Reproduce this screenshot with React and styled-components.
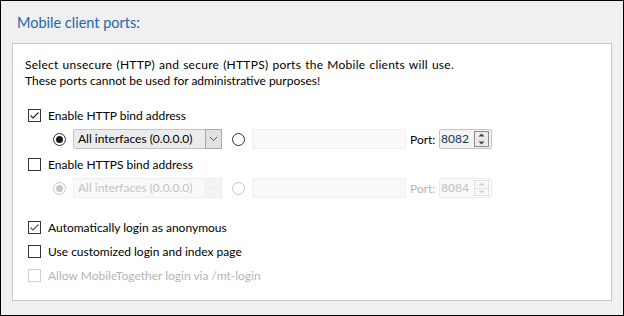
import React from "react";
import styled, { createGlobalStyle } from "styled-components";

const Global = createGlobalStyle`
  html, body { margin: 0; padding: 0; background: #f0f0f0; }
  * { box-sizing: border-box; }
`;

const FONT = `"Segoe UI", "Lato", "Open Sans", sans-serif`;

const Frame = styled.div`
  width: 624px;
  height: 316px;
  border: 1px solid #000;
  background: #f0f0f0;
  font-family: ${FONT};
  font-size: 12px;
  color: #000;
  display: flex;
  flex-direction: column;
  padding: 0 11px 14px 11px;
`;

const Title = styled.h2`
  margin: 0;
  height: 42px;
  padding: 12px 0 0 5px;
  font-weight: 400;
  font-size: 14.5px;
  line-height: 20px;
  color: #2467ae;
`;

const Panel = styled.div`
  flex: 1;
  background: #fff;
  border: 1px solid #c9c9c9;
  padding: 13px 12px 0 12px;
  display: flex;
  flex-direction: column;
`;

const Intro = styled.p`
  margin: 0 0 16px 0;
  line-height: 16px;
`;

const IntroLine = styled.span`
  display: block;
  white-space: nowrap;
  letter-spacing: ${(p) => p.$ls || 0}px;
  word-spacing: ${(p) => p.$ws || 0}px;
`;

const CheckRow = styled.label`
  display: flex;
  align-items: center;
  height: 20px;
  padding-left: 3px;
  margin-top: ${(p) => p.$mt || 0}px;
  color: ${(p) => (p.$disabled ? "#b4b4b4" : "#000")};
`;

const Box = styled.span`
  width: 13px;
  height: 13px;
  border: 1px solid ${(p) => (p.$disabled ? "#cfcfcf" : "#333")};
  background: #fff;
  margin-right: 7px;
  display: flex;
  align-items: center;
  justify-content: center;
  flex: none;
`;

const BindRow = styled.div`
  display: flex;
  align-items: center;
  height: 20px;
  margin-top: 4px;
  padding-left: 28px;
`;

const Radio = styled.span`
  width: 13px;
  height: 13px;
  border-radius: 50%;
  border: 1px solid ${(p) => (p.$disabled ? "#c6c6c6" : "#333")};
  background: #fff;
  display: flex;
  align-items: center;
  justify-content: center;
  flex: none;
  margin-left: ${(p) => p.$ml || 0}px;
  &::after {
    content: "";
    display: ${(p) => (p.$checked ? "block" : "none")};
    width: 7px;
    height: 7px;
    border-radius: 50%;
    background: ${(p) => (p.$disabled ? "#c6c6c6" : "#1a1a1a")};
  }
`;

const Combo = styled.div`
  flex: 0 0 149px;
  height: 20px;
  margin-left: 7px;
  border: 1px solid ${(p) => (p.$disabled ? "#ededed" : "#c4c4c4")};
  border-radius: 2px;
  background: ${(p) => (p.$disabled ? "#f9f9f9" : "#ebebeb")};
  display: flex;
  align-items: center;
  color: ${(p) => (p.$disabled ? "#c4c4c4" : "#000")};
`;

const ComboText = styled.span`
  flex: 1;
  min-width: 0;
  padding-left: 4px;
  white-space: nowrap;
  overflow: hidden;
  line-height: 18px;
`;

const DropBtn = styled.span`
  flex: 0 0 17px;
  height: 20px;
  margin: -1px -1px -1px 0;
  border: 1px solid ${(p) => (p.$disabled ? "#ededed" : "#a8a8a8")};
  background: ${(p) => (p.$disabled ? "#f4f4f4" : "#e1e1e1")};
  display: flex;
  align-items: center;
  justify-content: center;
`;

const TextField = styled.div`
  flex: 0 0 154px;
  height: 20px;
  margin-left: 7px;
  border: 1px solid #efefef;
  border-radius: 2px;
  background: #f9f9f9;
`;

const PortLabel = styled.span`
  margin-left: 4px;
  flex: 0 0 23px;
  min-width: 0;
  white-space: nowrap;
  color: ${(p) => (p.$disabled ? "#b4b4b4" : "#000")};
`;

const Spin = styled.div`
  flex: 0 0 53px;
  height: 20px;
  margin-left: 6px;
  border: 1px solid ${(p) => (p.$disabled ? "#ececec" : "#c4c4c4")};
  border-radius: 2px;
  background: ${(p) => (p.$disabled ? "#fafafa" : "#f3f3f3")};
  display: flex;
  align-items: center;
  color: ${(p) => (p.$disabled ? "#c0c0c0" : "#17325c")};
`;

const SpinText = styled.span`
  flex: 1;
  padding-left: 1px;
  line-height: 18px;
`;

const SpinBtns = styled.span`
  width: 15px;
  height: 16px;
  margin-right: 2px;
  display: flex;
  flex-direction: column;
  border: 1px solid ${(p) => (p.$disabled ? "#e2e2e2" : "#8c8c8c")};
  background: ${(p) => (p.$disabled ? "#f7f7f7" : "#ececec")};
`;

const SpinHalf = styled.span`
  flex: 1;
  display: flex;
  align-items: center;
  justify-content: center;
  & + & {
    border-top: 1px solid ${(p) => (p.$disabled ? "#e2e2e2" : "#8c8c8c")};
  }
`;

const Check = ({ color = "#222" }) => (
  <svg width="11" height="11" viewBox="0 0 11 11">
    <polyline points="1.5,5.5 4,8 9.5,2.5" fill="none" stroke={color} strokeWidth="1.1" />
  </svg>
);

const Chevron = ({ color }) => (
  <svg width="9" height="6" viewBox="0 0 9 6">
    <polyline points="1,1 4.5,4.5 8,1" fill="none" stroke={color} strokeWidth="1" />
  </svg>
);

const Tri = ({ up, color }) => (
  <svg width="7" height="4" viewBox="0 0 7 4">
    <polygon points={up ? "0.5,3.5 3.5,0.5 6.5,3.5" : "0.5,0.5 3.5,3.5 6.5,0.5"} fill={color} />
  </svg>
);

const CheckItem = ({ checked, disabled, mt, children, checkColor }) => (
  <CheckRow $mt={mt} $disabled={disabled}>
    <Box $disabled={disabled}>{checked && <Check color={checkColor} />}</Box>
    {children}
  </CheckRow>
);

const Bind = ({ disabled, port }) => {
  const ic = disabled ? "#d0d0d0" : "#444";
  return (
    <BindRow>
      <Radio $checked $disabled={disabled} />
      <Combo $disabled={disabled}>
        <ComboText>All interfaces (0.0.0.0)</ComboText>
        <DropBtn $disabled={disabled}>
          <Chevron color={disabled ? "#e6e6e6" : "#555"} />
        </DropBtn>
      </Combo>
      <Radio $ml={10} $disabled={disabled} />
      <TextField />
      <PortLabel $disabled={disabled}>Port:</PortLabel>
      <Spin $disabled={disabled}>
        <SpinText>{port}</SpinText>
        <SpinBtns $disabled={disabled}>
          <SpinHalf $disabled={disabled}><Tri up color={ic} /></SpinHalf>
          <SpinHalf $disabled={disabled}><Tri color={ic} /></SpinHalf>
        </SpinBtns>
      </Spin>
    </BindRow>
  );
};

export default function App() {
  return (
    <>
      <Global />
      <Frame>
        <Title>Mobile client ports:</Title>
        <Panel>
          <Intro>
            <IntroLine $ls={0.25} $ws={0.75}>
              Select unsecure (HTTP) and secure (HTTPS) ports the Mobile clients will use.
            </IntroLine>
            <IntroLine>These ports cannot be used for administrative purposes!</IntroLine>
          </Intro>
          <CheckItem checked>Enable HTTP bind address</CheckItem>
          <Bind port="8082" />
          <CheckItem mt={5}>Enable HTTPS bind address</CheckItem>
          <Bind disabled port="8084" />
          <CheckItem checked mt={19} checkColor="#555">Automatically login as anonymous</CheckItem>
          <CheckItem mt={4}>Use customized login and index page</CheckItem>
          <CheckItem mt={4} disabled>Allow MobileTogether login via /mt-login</CheckItem>
        </Panel>
      </Frame>
    </>
  );
}
